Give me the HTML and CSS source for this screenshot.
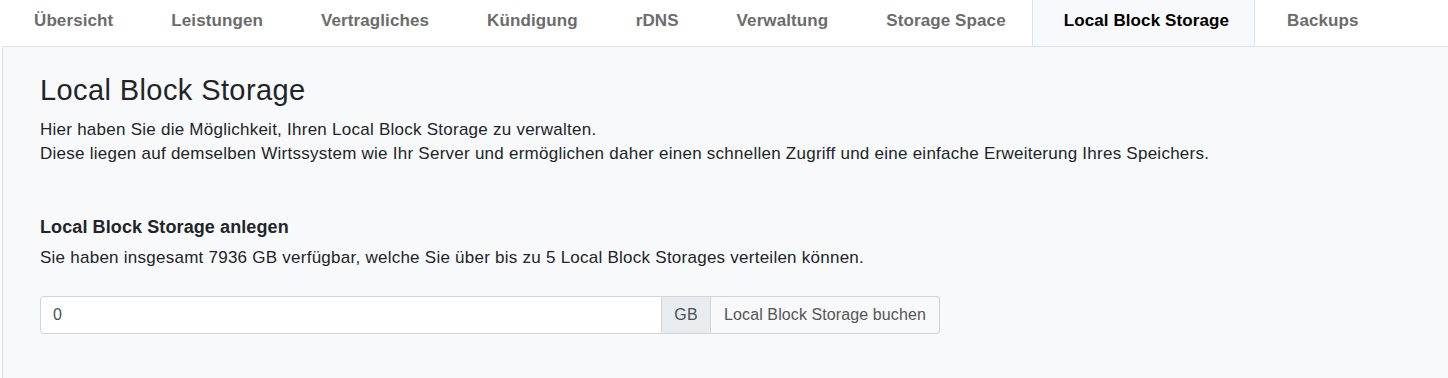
FILE: index.html
```html
<!DOCTYPE html>
<html lang="de">
<head>
    <meta charset="UTF-8">
    <meta name="viewport" content="width=device-width, initial-scale=1.0">
    <title>Local Block Storage</title>
    <link rel="stylesheet" href="styles.css">
</head>
<body>
    <div class="wrapper">
        <ul class="nav-tabs">
            <li><a href="#">Übersicht</a></li>
            <li><a href="#">Leistungen</a></li>
            <li><a href="#">Vertragliches</a></li>
            <li><a href="#">Kündigung</a></li>
            <li><a href="#">rDNS</a></li>
            <li><a href="#">Verwaltung</a></li>
            <li><a href="#">Storage Space</a></li>
            <li><a href="#" class="active">Local Block Storage</a></li>
            <li><a href="#">Backups</a></li>
        </ul>
        <div class="tab-content">
            <h2>Local Block Storage</h2>
            <p>
                Hier haben Sie die Möglichkeit, Ihren Local Block Storage zu verwalten.<br>
                Diese liegen auf demselben Wirtssystem wie Ihr Server und ermöglichen daher einen schnellen Zugriff und eine einfache Erweiterung Ihres Speichers.
            </p>
            <h5>Local Block Storage anlegen</h5>
            <p class="hint">Sie haben insgesamt 7936 GB verfügbar, welche Sie über bis zu 5 Local Block Storages verteilen können.</p>
            <div class="input-group">
                <input type="text" value="0">
                <span class="addon">GB</span>
                <button>Local Block Storage buchen</button>
            </div>
        </div>
    </div>
</body>
</html>
```

FILE: styles.css
```css
html, body {
    margin: 0;
    padding: 0;
    background-color: #fff;
    font-family: "Liberation Sans", Arial, sans-serif;
    font-size: 17px;
    letter-spacing: 0.25px;
    color: #212529;
    overflow: hidden;
}
.wrapper {
    margin-left: 2px;
    margin-right: -10px;
}
.nav-tabs {
    display: flex;
    list-style: none;
    margin: 0;
    padding: 0;
    border-bottom: 1px solid #dee2e6;
    height: 46px;
}
.nav-tabs li {
    margin-bottom: -1px;
}
.nav-tabs a {
    display: block;
    height: 46px;
    box-sizing: border-box;
    padding: 11px 25px 0 31px;
    border: 1px solid transparent;
    border-top: 0;
    color: #6c6c6c;
    font-weight: bold;
    font-size: 17px;
    letter-spacing: 0.1px;
    text-decoration: none;
}
.nav-tabs a.active {
    color: #000;
    background-color: #f8f9fa;
    border-color: #dee2e6;
    border-bottom-color: #f8f9fa;
}
.tab-content {
    background-color: #f8f9fa;
    border-left: 1px solid #dee2e6;
    padding: 26px 38px 60px 37px;
}
h2 {
    margin: 0 0 11px 0;
    font-size: 29px;
    font-weight: normal;
    letter-spacing: 0.4px;
    line-height: 34px;
}
p {
    margin: 0;
    line-height: 24px;
}
h5 {
    margin: 51px 0 8px 0;
    font-size: 18px;
    font-weight: bold;
    letter-spacing: 0.1px;
    line-height: 21px;
}
.hint {
    margin-bottom: 26px;
}
.input-group {
    display: flex;
    width: 900px;
    height: 38px;
}
.input-group input {
    flex: 1;
    min-width: 0;
    border: 1px solid #ced4da;
    border-radius: 4px 0 0 4px;
    padding: 0 12px;
    font-family: inherit;
    font-size: 16px;
    color: #495057;
    background-color: #fff;
}
.addon {
    display: flex;
    align-items: center;
    padding: 0 12px;
    background-color: #e9ecef;
    border: 1px solid #ced4da;
    border-left: 0;
    font-size: 16px;
    letter-spacing: 0.3px;
    color: #495057;
}
.input-group button {
    width: 229px;
    padding: 0 12px;
    background-color: #f8f9fa;
    border: 1px solid #ced4da;
    border-left: 0;
    border-radius: 0 4px 4px 0;
    font-family: inherit;
    font-size: 16px;
    letter-spacing: 0.1px;
    color: #555;
    cursor: pointer;
}
```
